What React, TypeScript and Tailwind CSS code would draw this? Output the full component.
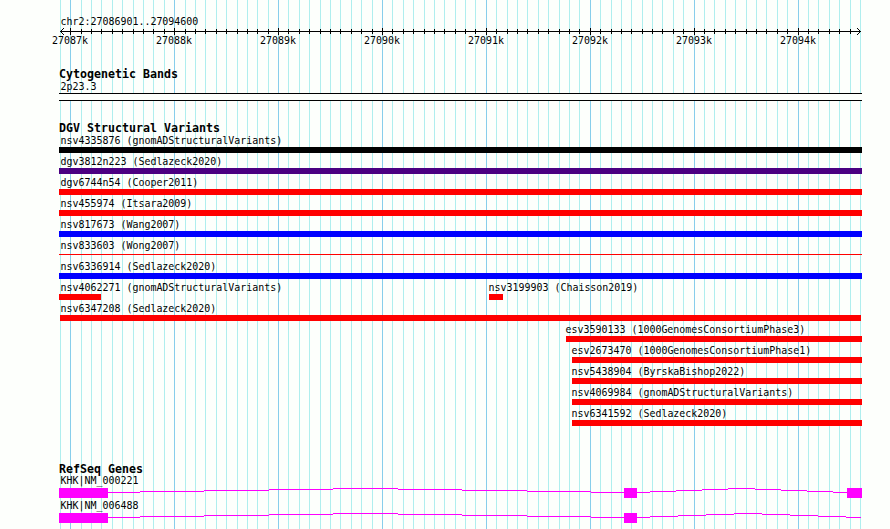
import React from 'react';

const START = 27086901;
const LEFT = 60;
const SCALE = 800 / 7700;

const toX = (pos: number) => Math.round(LEFT + (pos - START) * SCALE);

const ticks = Array.from({ length: 78 }, (_, i) => {
  const pos = 27086900 + i * 100;
  return { pos, x: toX(pos), major: pos % 1000 === 0 };
});

const majors = ticks.filter((t) => t.major);

interface Feature {
  label: string;
  labelX: number;
  x: number;
  width: number;
  color: string;
  thin?: boolean;
}

const RED = 'bg-[#ff0000]';
const BLUE = 'bg-[#0000ff]';

const rows: Feature[][] = [
  [{ label: 'nsv4335876 (gnomADStructuralVariants)', labelX: 60.5, x: 59, width: 803, color: 'bg-black' }],
  [{ label: 'dgv3812n223 (Sedlazeck2020)', labelX: 60.5, x: 59, width: 803, color: 'bg-[#4b0082]' }],
  [{ label: 'dgv6744n54 (Cooper2011)', labelX: 60.5, x: 59, width: 803, color: RED }],
  [{ label: 'nsv455974 (Itsara2009)', labelX: 60.5, x: 59, width: 803, color: RED }],
  [{ label: 'nsv817673 (Wang2007)', labelX: 60.5, x: 59, width: 803, color: BLUE }],
  [{ label: 'nsv833603 (Wong2007)', labelX: 60.5, x: 59, width: 803, color: RED, thin: true }],
  [{ label: 'nsv6336914 (Sedlazeck2020)', labelX: 60.5, x: 59, width: 803, color: BLUE }],
  [
    { label: 'nsv4062271 (gnomADStructuralVariants)', labelX: 60.5, x: 59, width: 42, color: RED },
    { label: 'nsv3199903 (Chaisson2019)', labelX: 488.5, x: 489, width: 14, color: RED },
  ],
  [{ label: 'nsv6347208 (Sedlazeck2020)', labelX: 60.5, x: 60, width: 801, color: RED }],
  [{ label: 'esv3590133 (1000GenomesConsortiumPhase3)', labelX: 565.5, x: 566, width: 296, color: RED }],
  [{ label: 'esv2673470 (1000GenomesConsortiumPhase1)', labelX: 571.5, x: 572, width: 290, color: RED }],
  [{ label: 'nsv5438904 (ByrskaBishop2022)', labelX: 571.5, x: 572, width: 290, color: RED }],
  [{ label: 'nsv4069984 (gnomADStructuralVariants)', labelX: 571.5, x: 572, width: 290, color: RED }],
  [{ label: 'nsv6341592 (Sedlazeck2020)', labelX: 571.5, x: 572, width: 290, color: RED }],
];

// exons are [x, width]; introns are [x1, x2, y] steps inside the 10px glyph
const firstIntron = [
  [108, 140, 4], [140, 204, 3], [204, 269, 2], [269, 333, 1], [333, 398, 0],
  [398, 462, 1], [462, 527, 2], [527, 591, 3], [591, 624, 4],
];

const genes = [
  {
    label: 'KHK|NM_000221',
    exons: [[59, 49], [624, 13], [847, 15]],
    introns: [
      ...firstIntron,
      [637, 650, 4], [650, 676, 3], [676, 702, 2], [702, 728, 1], [728, 755, 0],
      [755, 781, 1], [781, 807, 2], [807, 833, 3], [833, 847, 4],
    ],
  },
  {
    label: 'KHK|NM_006488',
    exons: [[59, 49], [624, 13]],
    introns: [
      ...firstIntron,
      [637, 650, 4], [650, 678, 3], [678, 706, 2], [706, 734, 1], [734, 762, 0],
      [762, 790, 1], [790, 818, 2], [818, 846, 3], [846, 861, 4],
    ],
  },
];

const Gridlines: React.FC = () => (
  <svg className="absolute inset-0" width="890" height="529" shapeRendering="crispEdges">
    {ticks.map((t) => (
      <rect key={t.pos} x={t.x} y="0" width="1" height="529" fill={t.major ? '#87ceeb' : '#afeeee'} />
    ))}
  </svg>
);

const Heading: React.FC<{ children: React.ReactNode }> = ({ children }) => (
  <h2 className="ml-[59px] h-3 text-[11.63px] leading-3 font-bold whitespace-pre">{children}</h2>
);

const Ruler: React.FC = () => (
  <div>
    <svg className="block" width="890" height="9" shapeRendering="crispEdges">
      <rect x="60" y="4" width="801" height="1" />
      {ticks.slice(1, -1).map((t) => (
        <rect key={t.pos} x={t.x} y={t.major ? 1 : 2} width="1" height={t.major ? 7 : 5} />
      ))}
      {[1, 2, 3].map((d) => (
        <g key={d}>
          <rect x={60 + d} y={4 - d} width="1" height="1" />
          <rect x={60 + d} y={4 + d} width="1" height="1" />
          <rect x={860 - d} y={4 - d} width="1" height="1" />
          <rect x={860 - d} y={4 + d} width="1" height="1" />
        </g>
      ))}
    </svg>
    <div className="ml-[52px] flex h-3 leading-[10px]">
      {majors.map((t) => (
        <span key={t.pos} className="w-[104px] shrink-0">{t.pos / 1000}k</span>
      ))}
    </div>
  </div>
);

const VariantRow: React.FC<{ features: Feature[] }> = ({ features }) => (
  <div className="grid h-[21px]">
    {features.map((f) => (
      <div key={f.label} className="col-start-1 row-start-1">
        <div className="h-3.5 leading-4 whitespace-pre" style={{ marginLeft: f.labelX }}>{f.label}</div>
        <div
          className={`${f.color} ${f.thin ? 'mt-[2px] h-px' : 'h-1.5'}`}
          style={{ marginLeft: f.x, width: f.width }}
        />
      </div>
    ))}
  </div>
);

const App: React.FC = () => {
  return (
    <div className="relative h-[529px] w-[890px] overflow-hidden bg-[#fdfffc] font-['DejaVu_Sans_Mono',monospace] text-[9.967px] text-black">
      <Gridlines />
      <main className="relative pt-[15px]">
        <div className="ml-[60.5px] h-3 leading-[14px]">chr2:27086901..27094600</div>
        <Ruler />

        <section className="pt-5">
          <Heading>Cytogenetic Bands</Heading>
          <div className="ml-[60.5px] h-[13px] leading-[13px]">2p23.3</div>
          <div className="ml-[59px] h-2 w-[803px] border-y border-black bg-[#fdfffc]" />
        </section>

        <section className="pt-[21px]">
          <Heading>DGV Structural Variants</Heading>
          <div className="-mt-px">
            {rows.map((features) => (
              <VariantRow key={features[0].label} features={features} />
            ))}
          </div>
        </section>

        <section className="pt-9">
          <Heading>RefSeq Genes</Heading>
          {genes.map((g) => (
            <div key={g.label} className="h-[25px]">
              <div className="ml-[60.5px] h-[13px] leading-[11px]">{g.label}</div>
              <svg className="block" width="890" height="10" fill="#ff00ff" shapeRendering="crispEdges">
                {g.introns.map(([x1, x2, y]) => (
                  <rect key={x1} x={x1} y={y} width={x2 - x1} height="1" />
                ))}
                {g.exons.map(([x, w]) => (
                  <rect key={x} x={x} y="0" width={w} height="10" />
                ))}
              </svg>
            </div>
          ))}
        </section>
      </main>
    </div>
  );
};

export default App;
